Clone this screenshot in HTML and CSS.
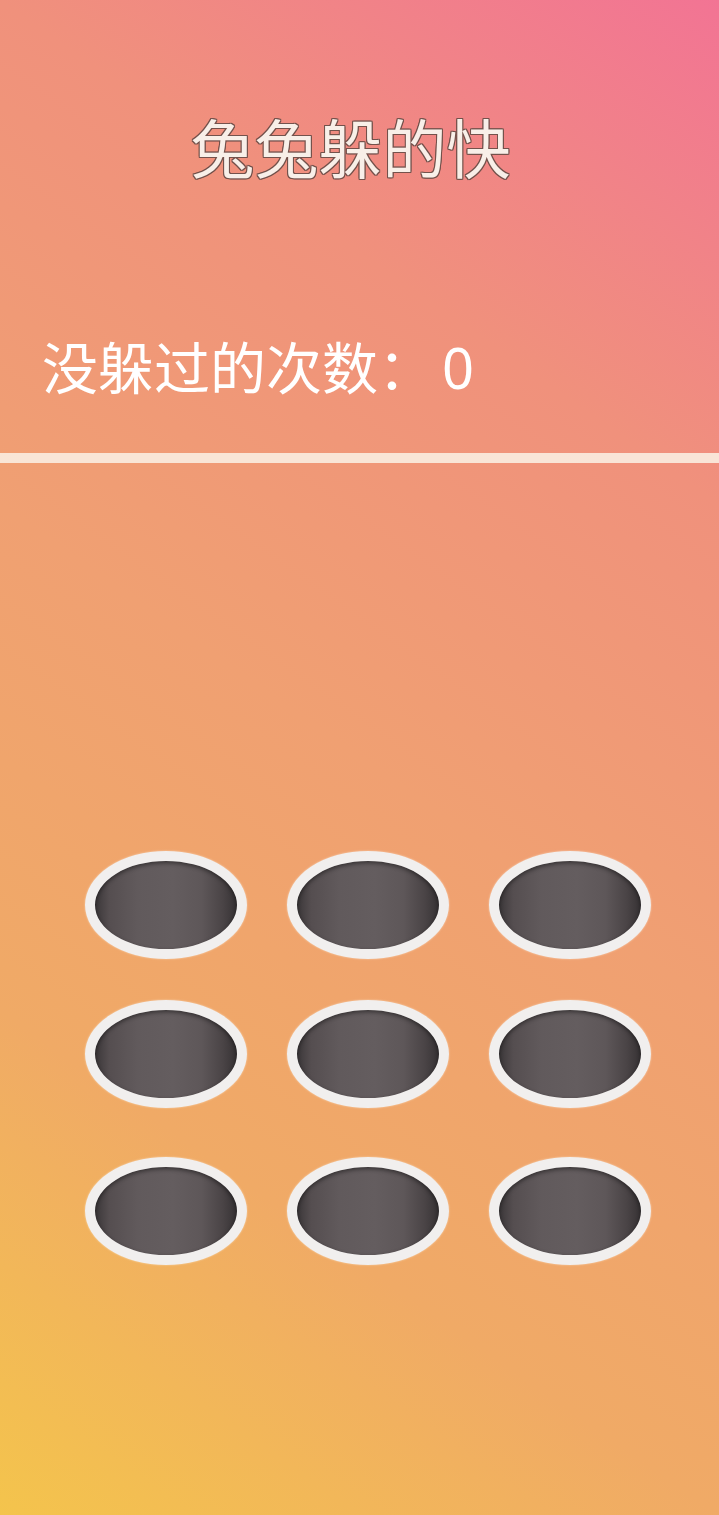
FILE: index.html
```html
<!DOCTYPE html>
<html lang="zh-CN">
<head>
<meta charset="utf-8">
<title>兔兔躲的快</title>
<link rel="stylesheet" href="styles.css">
</head>
<body>
<div class="page">
  <h1 class="title">兔兔躲的快</h1>
  <div class="score">没躲过的次数：<span class="num">0</span></div>
  <div class="divider"></div>
  <div class="board">
    <div class="row">
      <div class="hole"></div><div class="hole"></div><div class="hole"></div>
    </div>
    <div class="row">
      <div class="hole"></div><div class="hole"></div><div class="hole"></div>
    </div>
    <div class="row row-last">
      <div class="hole"></div><div class="hole"></div><div class="hole"></div>
    </div>
  </div>
</div>
</body>
</html>
```

FILE: styles.css
```css
html, body {
  margin: 0;
  padding: 0;
}
body {
  width: 719px;
  height: 1515px;
  overflow: hidden;
  font-family: "Noto Sans CJK SC", "Noto Sans", sans-serif;
  background: linear-gradient(35deg, #f4c44c 0%, #f0aa66 25%, #f0a072 50%, #f0917c 75%, #f27494 100%);
}
.page {
  display: flex;
  flex-direction: column;
  padding-top: 113px;
}
.title {
  margin: 0;
  padding-right: 18px;
  text-align: center;
  font-size: 64px;
  line-height: 64px;
  font-weight: 400;
  color: #f8efe8;
  text-shadow:
    1px 0 0 #74524c,
    -1px 0 0 #74524c,
    0 1px 0 #74524c,
    0 -1px 0 #74524c,
    1px 1px 0 #74524c,
    -1px -1px 0 #74524c,
    1px -1px 0 #74524c,
    -1px 1px 0 #74524c;
}
.score {
  margin-top: 160px;
  padding-left: 42px;
  font-size: 56px;
  line-height: 56px;
  color: #ffffff;
}
.num {
  margin-left: 8px;
  font-family: "Noto Sans", sans-serif;
}
.divider {
  margin-top: 58px;
  height: 10px;
  background: rgba(250, 235, 222, 0.92);
}
.board {
  margin-top: 388px;
  padding-left: 85px;
  display: flex;
  flex-direction: column;
  gap: 41px;
}
.row {
  display: flex;
  gap: 40px;
}
.row-last {
  margin-top: 8px;
}
.hole {
  box-sizing: border-box;
  width: 162px;
  height: 108px;
  border-radius: 50%;
  border: 10px solid #f1efee;
  background: linear-gradient(to right, #3b3739 0%, #554e50 10%, #615a5c 30%, #645d5f 55%, #5e5759 75%, #4a4446 90%, #363234 100%);
  box-shadow: inset 0 2px 4px rgba(0, 0, 0, 0.45), 0 0 2px rgba(255, 236, 215, 0.7);
}
```
